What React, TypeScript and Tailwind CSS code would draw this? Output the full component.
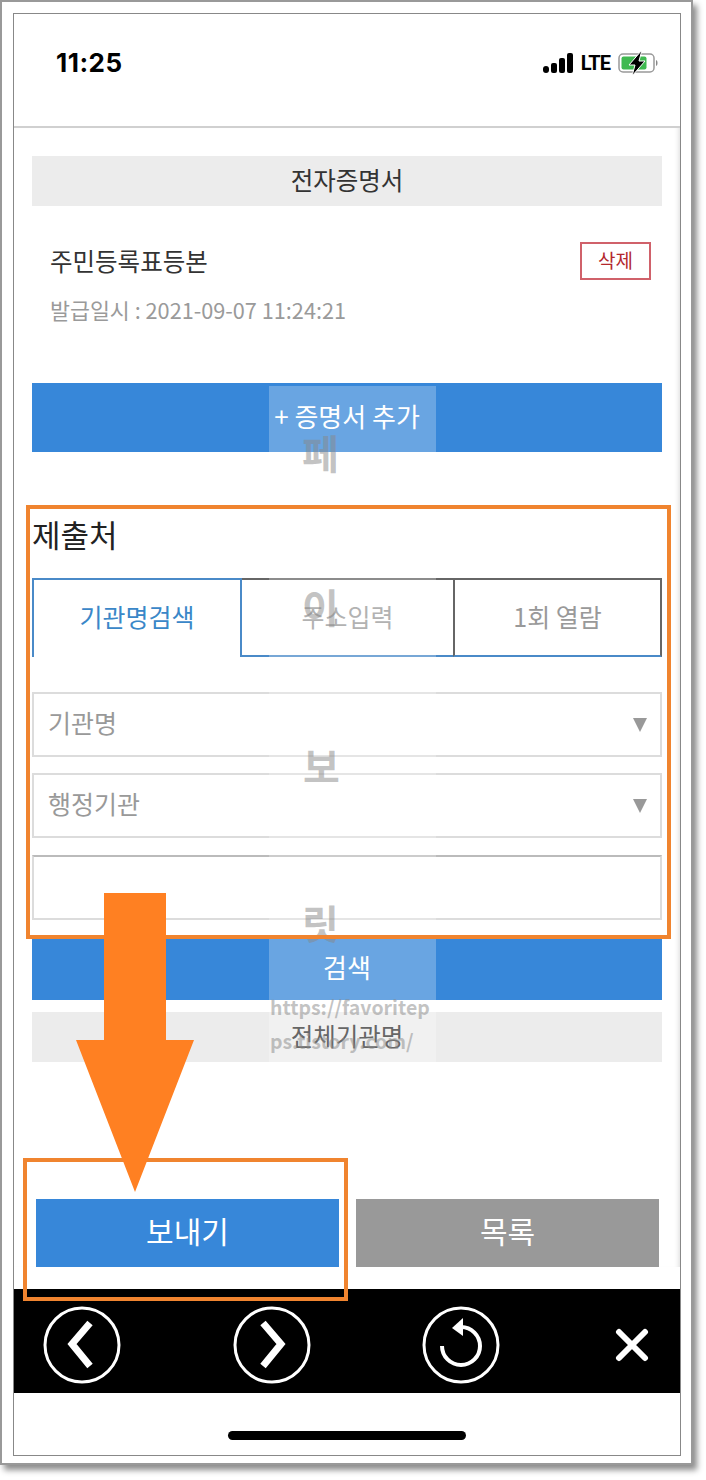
const font = { fontFamily: '"Noto Sans CJK KR", "Noto Sans", sans-serif' }

function Select({ label }: { label: string }) {
  return (
    <div className="flex items-center justify-between h-[65px] border-2 border-[#dcdcdc] pl-[14px] pr-[12px] text-[25px] text-[#999]">
      <span className="pb-[4px]">{label}</span>
      <svg width="16" height="15" viewBox="0 0 16 15">
        <path d="M1 1h14L8 15z" fill="#999" />
      </svg>
    </div>
  )
}

function CircleIcon({ children }: { children: React.ReactNode }) {
  return (
    <svg width="78" height="78" viewBox="0 0 78 78" fill="none" stroke="#fff">
      <circle cx="39" cy="39" r="37" strokeWidth="3" />
      {children}
    </svg>
  )
}

export default function App() {
  return (
    <div className="relative w-[706px] h-[1480px] bg-white overflow-hidden" style={font}>
      {/* screenshot card */}
      <div className="w-[693px] h-[1465px] border-2 border-[#999] pt-[11px] pl-[11px] shadow-[4px_5px_6px_rgba(0,0,0,0.45)]">
        <div className="w-[668px] h-[1443px] border border-[#888] bg-white flex flex-col">
          {/* status bar */}
          <div className="h-[114px] shrink-0 border-b-2 border-[#d0d0d0] flex items-start justify-between pt-[31px] pl-[42px] pr-[20px]">
            <span className="text-[26px] leading-[36px] font-bold text-black tracking-[0.5px]" style={{ fontFamily: '"Inter", sans-serif' }}>
              11:25
            </span>
            <div className="flex items-center gap-[7px] h-[36px]">
              <svg width="31" height="20" viewBox="0 0 31 20" fill="#000">
                <rect x="0" y="13" width="6" height="7" rx="3" />
                <rect x="8" y="10" width="6" height="10" rx="2" />
                <rect x="16" y="5" width="6" height="15" rx="2" />
                <rect x="24" y="0" width="6" height="20" rx="2" />
              </svg>
              <span className="text-[20px] font-bold text-black leading-none tracking-[-1px]" style={{ fontFamily: 'Roboto, sans-serif' }}>
                LTE
              </span>
              <svg width="42" height="26" viewBox="0 0 42 26" className="ml-[1px]">
                <rect x="1" y="4" width="35" height="18" rx="4" fill="none" stroke="#999" strokeWidth="1.5" />
                <rect x="3.5" y="6.500" width="25" height="13" rx="2" fill="#3fb950" />
                <path d="M38 10c2 .5 2 5.500 0 6z" fill="#888" />
                <path d="M24 0L11 15h6l-3 11 13-15h-6z" fill="#000" stroke="#fff" strokeWidth="1" />
              </svg>
            </div>
          </div>

          <div className="flex-1 flex flex-col px-[18px] text-[#333] shadow-[inset_-5px_0_5px_-4px_rgba(0,0,0,0.15)]">
            <div className="mt-[28px] h-[50px] bg-[#ececec] flex items-center justify-center text-[24.5px] pb-[2px]">전자증명서</div>

            <div className="mt-[36px] h-[38px] flex items-center justify-between pl-[18px] pr-[11px]">
              <span className="text-[24.5px]">주민등록표등본</span>
              <span className="w-[71px] h-[38px] border-2 border-[#d0616a] flex items-center justify-center text-[19px] text-[#b3282d] pb-[2px]">삭제</span>
            </div>
            <div className="mt-[16px] pl-[18px] h-[30px] leading-[28px] text-[21.7px] text-[#9a9a9a]">발급일시 : 2021-09-07 11:24:21</div>

            <div className="mt-[57px] h-[69px] bg-[#3787d9] text-white flex items-center justify-center text-[26px] pb-[4px]">+ 증명서 추가</div>

            <div className="mt-[63px] h-[40px] leading-[38px] text-[31px] text-[#222]">제출처</div>

            {/* tabs */}
            <div className="mt-[23px] h-[79px] flex text-[25px] text-[#999]">
              <div className="w-[210px] border-t-2 border-l-2 border-r-2 border-[#4a8ac8] flex items-center justify-center text-[#3a87c8] pb-[4px]">기관명검색</div>
              <div className="w-[211px] border-t-2 border-b-2 border-t-[#666] border-b-[#4a8ac8] flex items-center justify-center pb-[2px]">주소입력</div>
              <div className="flex-1 border-t-2 border-b-2 border-x-2 border-t-[#666] border-l-[#666] border-r-[#666] border-b-[#4a8ac8] flex items-center justify-center pb-[2px]">1회 열람</div>
            </div>

            <div className="mt-[35px] flex flex-col gap-[16px]">
              <Select label="기관명" />
              <Select label="행정기관" />
              <div className="mt-[1px] h-[65px] border-2 border-[#dcdcdc] border-t-[#bbb]" />
            </div>

            <div className="mt-[18px] h-[62px] bg-[#3787d9] text-white flex items-center justify-center text-[26px] pb-[6px]">검색</div>
            <div className="mt-[12px] h-[50px] bg-[#ececec] flex items-center justify-center text-[24.5px] pb-[2px]">전체기관명</div>

            <div className="mt-[137px] ml-[4px] mr-[3px] h-[68px] flex justify-between text-white text-[30px]">
              <div className="w-[303px] bg-[#3787d9] flex items-center justify-center pb-[6px]">보내기</div>
              <div className="w-[303px] bg-[#999] flex items-center justify-center pb-[6px]">목록</div>
            </div>
          </div>

          {/* browser toolbar */}
          <div className="mt-[22px] h-[104px] bg-black flex items-center pt-[8px] pl-[29px] pr-[31px] shrink-0">
            <CircleIcon>
              <path d="M47 17L29 38l18 22" strokeWidth="7" />
            </CircleIcon>
            <div className="ml-[112px]">
              <CircleIcon>
                <path d="M30 17l18 21-18 22" strokeWidth="7" />
              </CircleIcon>
            </div>
            <div className="ml-[111px]">
              <CircleIcon>
                <path d="M39 21a19 19 0 1 1-19 19" strokeWidth="4" />
                <path d="M41 12L30 22l11 8z" fill="#fff" stroke="none" />
              </CircleIcon>
            </div>
            <svg width="34" height="34" viewBox="0 0 34 34" className="ml-auto" fill="none" stroke="#fff" strokeWidth="6" strokeLinecap="round">
              <path d="M4 4l26 26M30 4L4 30" />
            </svg>
          </div>

          <div className="flex-1 flex items-start justify-center pt-[38px]">
            <div className="w-[238px] h-[9px] rounded-full bg-black" />
          </div>
        </div>
      </div>

      {/* blog watermark */}
      <div className="absolute left-[269px] top-[386px] w-[167px] h-[676px] bg-white/25" />
      <div className="absolute left-[302px] top-[426px] text-[40px] leading-[52px] font-bold text-[#888]/50">페</div>
      <div className="absolute left-[302px] top-[580px] text-[40px] leading-[52px] font-bold text-[#888]/50">이</div>
      <div className="absolute left-[303px] top-[739px] text-[40px] leading-[52px] font-bold text-[#888]/50">보</div>
      <div className="absolute left-[302px] top-[896px] text-[40px] leading-[52px] font-bold text-[#888]/50">릿</div>
      <div className="absolute left-[270px] top-[990px] w-[170px] text-[19.5px] leading-[34px] font-bold text-[#888]/50 break-all">https://favoritep ps.tistory.com/</div>

      {/* annotations */}
      <div className="absolute left-[26px] top-[505px] w-[645px] h-[434px] border-4 border-[#f0842f]" />
      <div className="absolute left-[23px] top-[1158px] w-[325px] h-[143px] border-4 border-[#f0842f]" />
      <svg className="absolute left-[76px] top-[893px]" width="118" height="300" viewBox="0 0 118 300">
        <path d="M28 0h62v147h28L59 299 0 147h28z" fill="#ff8022" />
      </svg>
    </div>
  )
}
